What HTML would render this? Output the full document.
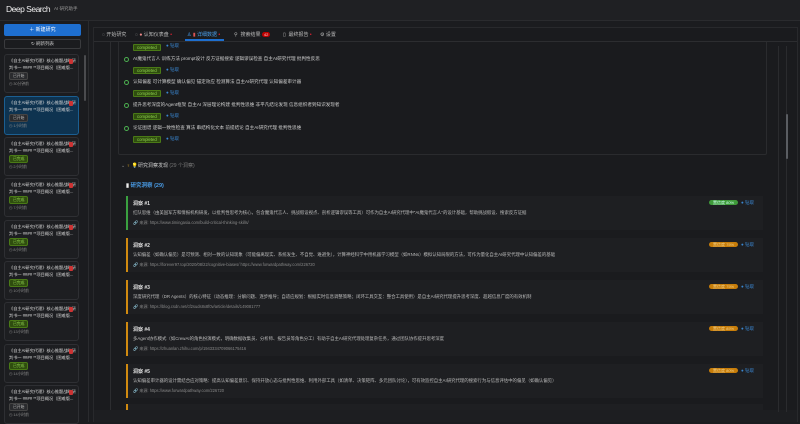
<!DOCTYPE html>
<html><head><meta charset="utf-8"><style>
*{margin:0;padding:0;box-sizing:border-box}
body{width:800px;height:422px;overflow:hidden;background:#1b1c1f;font-family:"Liberation Sans","Noto Sans CJK SC",sans-serif;color:#d0d0d0;position:relative}
.a{position:absolute;white-space:nowrap}
.hdr{left:0;top:0;width:800px;height:21px;background:#1f2023;border-bottom:1px solid #2a2b2e}
.side{left:0;top:21px;width:89px;height:401px;background:#1b1c1f;border-right:1px solid #2a2b2e}
.card{position:absolute;left:4px;width:75px;height:39px;border:1px solid #2e2f33;border-radius:3px;background:#1d1e21}
.card .t{position:absolute;left:4px;top:3px;font-size:4.2px;line-height:6.5px;color:#d8d8d8;white-space:nowrap;width:68px;overflow:hidden}
.card .s{position:absolute;left:4px;top:17px;font-size:3.8px;line-height:4px;padding:1px 3px;border-radius:2px}
.st{background:#2a2b2e;border:1px solid #444;color:#bbb}
.dn{background:#2f4d0f;border:1px solid #4a7a16;color:#8fd14f}
.card .tm{position:absolute;left:4px;top:27px;font-size:3.8px;line-height:5px;color:#888}
.card .fl{position:absolute;right:5px;top:4px;width:4px;height:5px;background:#c33;border-radius:1px}
.main{left:93px;top:27px;width:705px;height:395px;background:#1a1b1e;border:1px solid #28292c}
.tab{position:absolute;top:31px;font-size:5px;color:#bbb}
.dot{color:#e23;font-size:5px}
.it{font-size:4.6px;color:#ccc}
.ck{position:absolute;width:5px;height:5px;border:1px solid #4caf50;border-radius:50%}
.cb{position:absolute;font-size:4.3px;color:#8fd14f;background:#2f4d0f;border:1px solid #4a7a16;padding:0 3px;line-height:5px;border-radius:1px}
.dr{position:absolute;font-size:4.5px;color:#3a86d0}
.ins{position:absolute;left:126px;width:637px;height:34px;background:#1e1f22;border-left:2px solid #d08a10}
.ins .h{position:absolute;left:5px;top:4px;font-size:5px;font-weight:bold;color:#e0e0e0}
.ins .p{position:absolute;left:5px;top:14px;font-size:4.4px;color:#bbb;white-space:nowrap}
.ins .u{position:absolute;left:5px;top:24px;font-size:4.1px;color:#888;white-space:nowrap}
.ins .b{position:absolute;left:581px;top:4px;font-size:4px;color:#f2d08a;background:#c77d0a;border-radius:4px;padding:0 4px;line-height:5px}
.ins .k{position:absolute;left:613px;top:4px;font-size:4.5px;color:#3a86d0}
</style></head><body>
<div class="a hdr"></div>
<div class="a" style="left:6px;top:4px;font-size:8.5px;letter-spacing:-0.5px;color:#f0f0f0">Deep Search</div>
<div class="a" style="left:54px;top:6px;font-size:4.5px;color:#999">AI 研究助手</div>
<div class="a side"></div>
<div class="a" style="left:4px;top:24px;width:77px;height:12px;background:#1e6fd0;border-radius:2px;color:#fff;font-size:5px;text-align:center;line-height:12px">＋ 新建研究</div>
<div class="a" style="left:4px;top:39px;width:77px;height:10px;border:1px solid #3a3b3e;border-radius:2px;color:#ccc;font-size:4.5px;text-align:center;line-height:8px">↻ 刷新列表</div>
<div class="a" style="left:84px;top:55px;width:2px;height:46px;background:#4a4b4e;border-radius:1px"></div>

<div class="card" style="top:54px"><div class="t">《自主AI研究代理》核心推题战略研<br>判书一 #### **项目概况（困难版...</div><div class="fl"></div><div class="s st">已开始</div><div class="tm">◷ 30分钟前</div></div>
<div class="card" style="top:96px;background:#0e3350;border-color:#1b5f92"><div class="t">《自主AI研究代理》核心推题战略研<br>判书一 #### **项目概况（困难版...</div><div class="fl"></div><div class="s st">已开始</div><div class="tm">◷ 1小时前</div></div>
<div class="card" style="top:137px"><div class="t">《自主AI研究代理》核心推题战略研<br>判书一 #### **项目概况（困难版...</div><div class="fl"></div><div class="s dn">已完成</div><div class="tm">◷ 2小时前</div></div>
<div class="card" style="top:178px"><div class="t">《自主AI研究代理》核心推题战略研<br>判书一 #### **项目概况（困难版...</div><div class="fl"></div><div class="s dn">已完成</div><div class="tm">◷ 7小时前</div></div>
<div class="card" style="top:220px"><div class="t">《自主AI研究代理》核心推题战略研<br>判书一 #### **项目概况（困难版...</div><div class="fl"></div><div class="s dn">已完成</div><div class="tm">◷ 8小时前</div></div>
<div class="card" style="top:261px"><div class="t">《自主AI研究代理》核心推题战略研<br>判书一 #### **项目概况（困难版...</div><div class="fl"></div><div class="s dn">已完成</div><div class="tm">◷ 10小时前</div></div>
<div class="card" style="top:302px"><div class="t">《自主AI研究代理》核心推题战略研<br>判书一 #### **项目概况（困难版...</div><div class="fl"></div><div class="s dn">已完成</div><div class="tm">◷ 13小时前</div></div>
<div class="card" style="top:344px"><div class="t">《自主AI研究代理》核心推题战略研<br>判书一 #### **项目概况（困难版...</div><div class="fl"></div><div class="s dn">已完成</div><div class="tm">◷ 14小时前</div></div>
<div class="card" style="top:385px"><div class="t">《自主AI研究代理》核心推题战略研<br>判书一 #### **项目概况（困难版...</div><div class="fl"></div><div class="s st">已开始</div><div class="tm">◷ 14小时前</div></div>

<div class="a main"></div>
<div class="a" style="left:94px;top:41px;width:703px;height:1px;background:#2c2d30"></div>
<div class="tab" style="left:102px">◌ 开始研究</div>
<div class="tab" style="left:135px">◌ <span style="color:#e88">●</span> 认知仪表盘 <span class="dot">•</span></div>
<div class="tab" style="left:187px;color:#4a9de8">♙ <span style="color:#d55">▮</span> 详细数据 <span class="dot">•</span></div>
<div class="a" style="left:185px;top:39px;width:39px;height:2px;background:#1e6fd0"></div>
<div class="tab" style="left:234px">⚲ &nbsp;搜索结果 <span style="background:#b00;color:#fcc;border-radius:3px;padding:0 2px;font-size:4px">42</span></div>
<div class="tab" style="left:283px">▯ &nbsp;最终报告 <span class="dot">•</span></div>
<div class="tab" style="left:320px">⚙ 设置</div>

<div class="a" style="left:110px;top:42px;width:1px;height:380px;background:#2c2d30"></div>
<div class="a" style="left:118px;top:42px;width:649px;height:113px;border:1px solid #2a2b2e;border-top:none;border-radius:0 0 2px 2px"></div>
<div class="cb" style="left:133px;top:44px">completed</div><div class="dr" style="left:166px;top:43px">● 钻取</div>
<div class="ck" style="left:124px;top:57px"></div><div class="a it" style="left:133px;top:56px">AI魔鬼代言人 训练方法 prompt设计 反方证据搜索 逻辑谬误检查 自主AI研究代理 批判性反思</div>
<div class="cb" style="left:133px;top:67px">completed</div><div class="dr" style="left:166px;top:67px">● 钻取</div>
<div class="ck" style="left:124px;top:80px"></div><div class="a it" style="left:133px;top:79px">认知偏差 可计算模型 确认偏见 锚定效应 检测算法 自主AI研究代理 认知偏差审计器</div>
<div class="cb" style="left:133px;top:90px">completed</div><div class="dr" style="left:166px;top:90px">● 钻取</div>
<div class="ck" style="left:124px;top:103px"></div><div class="a it" style="left:133px;top:102px">提升思考深度的Agent框架 自主AI 深层理论构建 批判性思维 非平凡结论发现 信息组织者到知识发现者</div>
<div class="cb" style="left:133px;top:113px">completed</div><div class="dr" style="left:166px;top:113px">● 钻取</div>
<div class="ck" style="left:124px;top:126px"></div><div class="a it" style="left:133px;top:125px">论证图谱 逻辑一致性检查 算法 串结构化文本 前提结论 自主AI研究代理 批判性思维</div>
<div class="cb" style="left:133px;top:136px">completed</div><div class="dr" style="left:166px;top:136px">● 钻取</div>

<div class="a" style="left:121px;top:162px;font-size:5px;color:#ccc"><span style="color:#888">⌄</span> <span style="color:#d9a520">♀</span> 💡研究洞察发现 <span style="color:#777">(29 个洞察)</span></div>
<div class="a" style="left:126px;top:181px;font-size:5.5px;color:#4a9de8;font-weight:bold"><span style="color:#eee">▮</span> 研究洞察 (29)</div>

<div class="ins" style="top:196px;border-left-color:#3aa040"><div class="h">洞察 #1</div><div class="p">红队思维（由美国军方和情报机构研发，以批判性思考为核心，包含魔鬼代言人、挑战假设视点、剖析逻辑谬误等工具）可作为自主AI研究代理中"AI魔鬼代言人"的设计基础，帮助挑战假设、搜索反方证据</div><div class="u">🔗 来源: https://www.timingasia.com/build-critical-thinking-skills/</div><div class="b" style="background:#3f9a3a;color:#cfe">置信度 80%</div><div class="k">● 钻取</div></div>
<div class="ins" style="top:238px"><div class="h">洞察 #2</div><div class="p">认知偏差（如确认偏见）是可预测、相对一致的认知现象（可能偏离现实、系统发生、不自觉、难避免），计算神经科学中用机器学习模型（如RNNs）模拟认知局限的方法，可作为量化自主AI研究代理中认知偏差的基础</div><div class="u">🔗 来源: https://forever97.top/2020/08/22/cognitive-biases/ https://www.forwardpathway.com/226720</div><div class="b">置信度 75%</div><div class="k">● 钻取</div></div>
<div class="ins" style="top:280px"><div class="h">洞察 #3</div><div class="p">深度研究代理（DR Agents）的核心特征（动态推理：分解问题、逐步推导；自适应规划：根据实时信息调整策略；闭环工具交互：整合工具使用）是自主AI研究代理提升思考深度、超越信息广度的有效机制</div><div class="u">🔗 来源: https://blog.csdn.net/cf2suds8x8f0v/article/details/149081777</div><div class="b">置信度 75%</div><div class="k">● 钻取</div></div>
<div class="ins" style="top:322px"><div class="h">洞察 #4</div><div class="p">多Agent协作模式（如CrewAI的角色扮演模式，明确数据收集员、分析师、报告员等角色分工）有助于自主AI研究代理处理复杂任务，通过团队协作提升思考深度</div><div class="u">🔗 来源: https://zhuanlan.zhihu.com/p/1943334709066175416</div><div class="b">置信度 85%</div><div class="k">● 钻取</div></div>
<div class="ins" style="top:364px"><div class="h">洞察 #5</div><div class="p">认知偏差审计器的设计需结合应对策略：提高认知偏差意识、保持开放心态与批判性思维、利用外部工具（如清单、决策矩阵、多元团队讨论），可有效监控自主AI研究代理的搜索行为与信息评估中的偏见（如确认偏见）</div><div class="u">🔗 来源: https://www.forwardpathway.com/226720</div><div class="b">置信度 80%</div><div class="k">● 钻取</div></div>
<div class="ins" style="top:404px;height:6px"></div>
<div class="a" style="left:94px;top:410px;width:703px;height:12px;background:#1d1e21"></div>

<div class="a" style="left:778px;top:46px;width:1px;height:366px;background:#2a2b2e"></div>
<div class="a" style="left:786px;top:46px;width:1px;height:366px;background:#2a2b2e"></div>
<div class="a" style="left:786px;top:114px;width:2px;height:45px;background:#5a5d62;border-radius:1px"></div>
</body></html>
